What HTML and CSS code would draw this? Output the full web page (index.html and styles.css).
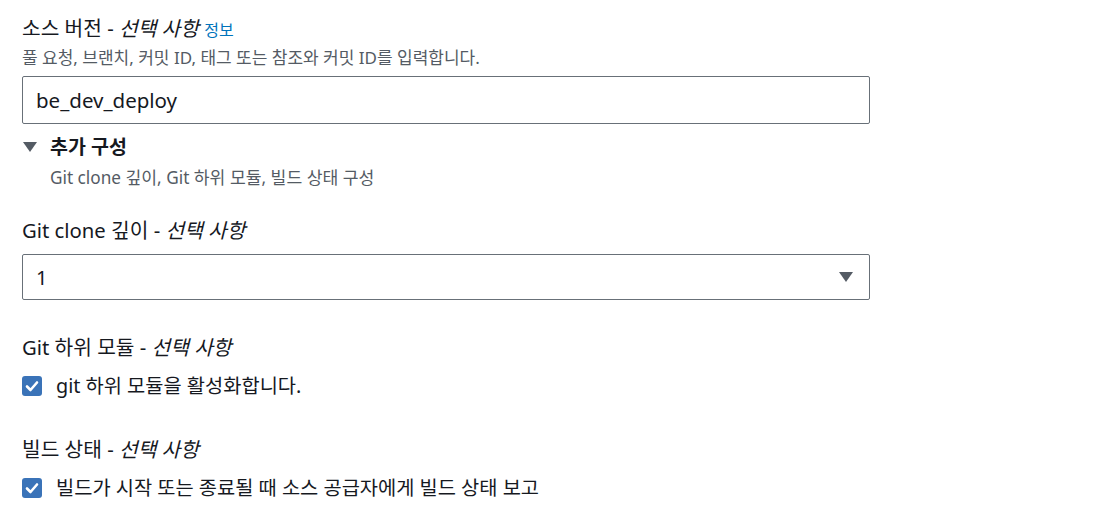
FILE: index.html
```html
<!DOCTYPE html>
<html lang="ko">
<head>
<meta charset="utf-8">
<link rel="stylesheet" href="styles.css">
</head>
<body>
<main class="form">
  <div class="label lbl-first">소스 버전 - <em>선택 사항</em> <a class="info" href="#">정보</a></div>
  <div class="desc">풀 요청, 브랜치, 커밋 ID, 태그 또는 참조와 커밋 ID를 입력합니다.</div>
  <div class="input">be_dev_deploy</div>

  <div class="expander">
    <svg class="caret" width="14" height="10" viewBox="0 0 14 10"><path d="M0 0 H14 L7 10 Z" fill="#545b64"/></svg>
    <span class="exp-title">추가 구성</span>
  </div>
  <div class="exp-desc">Git clone 깊이, Git 하위 모듈, 빌드 상태 구성</div>

  <div class="label lbl-clone">Git clone 깊이 - <em>선택 사항</em></div>
  <div class="select">
    <span>1</span>
    <svg class="sel-caret" width="14" height="10" viewBox="0 0 14 10"><path d="M0 0 H14 L7 10 Z" fill="#545b64"/></svg>
  </div>

  <div class="label lbl-sub">Git 하위 모듈 - <em>선택 사항</em></div>
  <div class="check-row">
    <span class="checkbox"><svg width="20" height="20" viewBox="0 0 20 20"><path d="M5 10.5 L8.5 14 L15 6.5" fill="none" stroke="#fff" stroke-width="2.6" stroke-linecap="round" stroke-linejoin="round"/></svg></span>
    <span class="check-text">git 하위 모듈을 활성화합니다.</span>
  </div>

  <div class="label lbl-build">빌드 상태 - <em>선택 사항</em></div>
  <div class="check-row">
    <span class="checkbox"><svg width="20" height="20" viewBox="0 0 20 20"><path d="M5 10.5 L8.5 14 L15 6.5" fill="none" stroke="#fff" stroke-width="2.6" stroke-linecap="round" stroke-linejoin="round"/></svg></span>
    <span class="check-text">빌드가 시작 또는 종료될 때 소스 공급자에게 빌드 상태 보고</span>
  </div>
</main>
</body>
</html>
```

FILE: styles.css
```css
html, body {
  margin: 0;
  padding: 0;
  background: #ffffff;
}
body {
  font-family: "Noto Sans", "Noto Sans CJK KR", sans-serif;
  color: #16191f;
}
.form {
  display: flex;
  flex-direction: column;
  padding: 16px 0 0 22px;
  width: 848px;
}
.label {
  font-size: 20.3px;
  line-height: 24px;
  color: #16191f;
}
.label em {
  font-style: italic;
}
.info {
  font-size: 16px;
  color: #0073bb;
  text-decoration: none;
}
.desc {
  margin-top: 6px;
  font-size: 17px;
  line-height: 20px;
  color: #545b64;
}
.input {
  margin-top: 8px;
  height: 48px;
  box-sizing: border-box;
  border: 1px solid #687078;
  border-radius: 2px;
  padding: 0 13px;
  display: flex;
  align-items: center;
  font-size: 20.5px;
  color: #16191f;
}
.expander {
  margin-top: 11px;
  height: 24px;
  display: flex;
  align-items: center;
  gap: 13px;
  padding-left: 1px;
}
.exp-title {
  font-size: 19.5px;
  font-weight: 700;
  line-height: 24px;
  color: #16191f;
}
.exp-desc {
  margin-top: 9px;
  padding-left: 28px;
  font-size: 17.2px;
  line-height: 20px;
  color: #545b64;
}
.lbl-clone { margin-top: 30px; }
.select {
  margin-top: 12px;
  height: 46px;
  box-sizing: border-box;
  border: 1px solid #687078;
  border-radius: 2px;
  padding: 0 16px 0 13px;
  display: flex;
  align-items: center;
  justify-content: space-between;
  font-size: 20px;
  color: #16191f;
}
.lbl-sub { margin-top: 35px; }
.lbl-build { margin-top: 39px; }
.check-row {
  margin-top: 15px;
  height: 24px;
  display: flex;
  align-items: center;
  gap: 14px;
}
.checkbox {
  width: 20px;
  height: 20px;
  border-radius: 3px;
  background: #3a73b8;
  display: flex;
}
.check-text {
  font-size: 19.8px;
  line-height: 24px;
  color: #16191f;
}
```
